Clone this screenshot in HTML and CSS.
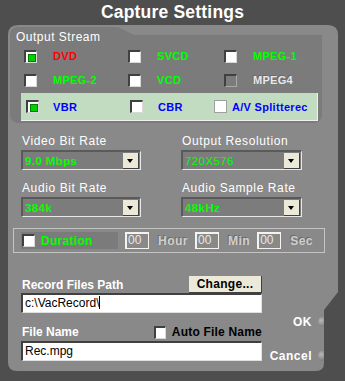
FILE: index.html
```html
<!DOCTYPE html>
<html lang="en">
<head>
    <meta charset="UTF-8">
    <title>Capture Settings</title>
    <link rel="stylesheet" href="styles.css">
</head>
<body>
    <h1 class="title">Capture Settings</h1>
    <div class="panel">
        <div class="stream-group">
            <div class="group-label">Output Stream</div>
            <div class="check-grid">
                <div class="opt"><span class="box checked"></span><span class="red">DVD</span></div>
                <div class="opt"><span class="box"></span><span class="green">SVCD</span></div>
                <div class="opt"><span class="box"></span><span class="green">MPEG-1</span></div>
                <div class="opt"><span class="box"></span><span class="green">MPEG-2</span></div>
                <div class="opt"><span class="box"></span><span class="green">VCD</span></div>
                <div class="opt"><span class="box disabled"></span><span class="muted">MPEG4</span></div>
            </div>
            <div class="rate-band">
                <div class="opt opt-vbr"><span class="box checked"></span><span class="blue">VBR</span></div>
                <div class="opt opt-cbr"><span class="box"></span><span class="blue">CBR</span></div>
                <div class="opt opt-av"><span class="box flat"></span><span class="blue">A/V Splitterec</span></div>
            </div>
        </div>

        <div class="select-grid">
            <div class="field">
                <label>Video Bit Rate</label>
                <div class="select"><span class="bold">9.0 Mbps</span><span class="drop"></span></div>
            </div>
            <div class="field">
                <label>Output Resolution</label>
                <div class="select"><span>720X576</span><span class="drop"></span></div>
            </div>
            <div class="field">
                <label>Audio Bit Rate</label>
                <div class="select"><span class="bold">384k</span><span class="drop"></span></div>
            </div>
            <div class="field">
                <label>Audio Sample Rate</label>
                <div class="select"><span class="bold">48kHz</span><span class="drop"></span></div>
            </div>
        </div>

        <div class="duration">
            <div class="dur-check"><span class="box"></span><span class="green">Duration</span></div>
            <span class="num">00</span><span class="unit">Hour</span>
            <span class="num">00</span><span class="unit">Min</span>
            <span class="num">00</span><span class="unit">Sec</span>
        </div>

        <div class="files">
            <div class="files-left">
                <div class="row-head">
                    <span class="head">Record Files Path</span>
                    <button class="change-btn">Change...</button>
                </div>
                <div class="text-input">c:\VacRecord\<span class="caret"></span></div>
                <div class="row-head row-name">
                    <span class="head">File Name</span>
                    <span class="auto"><span class="box"></span>Auto File Name</span>
                </div>
                <div class="text-input">Rec.mpg</div>
            </div>
            <div class="actions">
                <div class="action action-ok">OK<span class="knob"></span></div>
                <div class="action">Cancel<span class="knob"></span></div>
            </div>
        </div>
    </div>
</body>
</html>
```

FILE: styles.css
```css
* {
    box-sizing: border-box;
    margin: 0;
    padding: 0;
}

body {
    width: 345px;
    height: 381px;
    overflow: hidden;
    background-color: #4e4e4e;
    font-family: "Liberation Sans", Arial, sans-serif;
    font-size: 12px;
    color: #fff;
}

.title {
    height: 25px;
    line-height: 25px;
    text-align: center;
    font-size: 17.5px;
    font-weight: bold;
    letter-spacing: 0.2px;
    color: #fff;
}

.panel {
    position: relative;
    margin-left: 8px;
    width: 330px;
    height: 346px;
    padding-top: 2px;
    background-color: #898989;
    clip-path: path("M10,0 H320 Q330,0 330,10 V267 L316,285 V338 Q316,346 308,346 H9 Q0,346 0,337 V10 Q0,0 10,0 Z");
}

/* output stream group */
.stream-group {
    position: relative;
    margin-left: 2px;
    width: 312px;
    height: 96px;
    background-color: #7b7b7b;
    border-radius: 8px;
}

.stream-group::after {
    content: "";
    position: absolute;
    top: 0;
    left: 108px;
    right: 0;
    height: 8px;
    background-color: #898989;
    clip-path: polygon(0 0, 100% 0, 100% 100%, 16px 100%);
}

.group-label {
    padding: 3px 0 0 6px;
    height: 17px;
    line-height: 14px;
    letter-spacing: 0.5px;
}

.check-grid {
    display: grid;
    grid-template-columns: 104px 96px 100px;
    grid-auto-rows: 24px;
    padding-left: 14px;
}

.opt {
    display: flex;
    align-items: center;
    font-size: 11px;
    font-weight: bold;
    letter-spacing: 0.3px;
}

.opt .box {
    margin-right: 16px;
}

.box {
    display: inline-block;
    position: relative;
    width: 13px;
    height: 13px;
    background-color: #fff;
    border-top: 2px solid #404040;
    border-left: 2px solid #404040;
    border-right: 1px solid #d8d8d8;
    border-bottom: 1px solid #d8d8d8;
    flex: none;
}

.box.checked::after {
    content: "";
    position: absolute;
    left: 2px;
    top: 2px;
    width: 6px;
    height: 6px;
    background-color: #00d000;
    border: 1px solid #008000;
}

.box.disabled {
    background-color: #7b7b7b;
    border-right-color: #a8a8a8;
    border-bottom-color: #a8a8a8;
}

.box.flat {
    border: 1px solid #a0a0a0;
    background-color: #fff;
}

.red { color: #ff0000; }
.green { color: #00ff00; }
.blue { color: #0000ff; }

.muted {
    color: #e8e8e8;
    text-shadow: -1px -1px 0 #6a6a6a;
}

.rate-band {
    display: flex;
    align-items: center;
    margin: 1px 0 0 11px;
    width: 297px;
    height: 28px;
    background-color: #c2dcc2;
    border-right: 1px solid #f0f0f0;
    border-bottom: 1px solid #f0f0f0;
    padding-left: 5px;
}

.opt-vbr { width: 104px; }
.opt-vbr .box { margin-right: 14px; }
.opt-cbr { width: 84px; }
.opt-cbr .box { margin-right: 15px; }
.opt-av .box { margin-right: 5px; }

/* selects */
.select-grid {
    display: grid;
    grid-template-columns: 120px 121px;
    column-gap: 40px;
    row-gap: 11px;
    margin: 11px 0 0 13px;
}

.field label {
    display: block;
    height: 16px;
    line-height: 14px;
    letter-spacing: 0.6px;
    padding-left: 1px;
}

.select {
    display: flex;
    align-items: center;
    justify-content: space-between;
    height: 20px;
    background-color: #7c7c7c;
    border-top: 2px solid #5a5a5a;
    border-left: 2px solid #5a5a5a;
    border-right: 1px solid #e8e8e8;
    border-bottom: 1px solid #e8e8e8;
    color: #00ff00;
    font-size: 11.5px;
    padding-left: 2px;
    letter-spacing: 0.4px;
}

.select .bold {
    font-weight: bold;
}

.drop {
    position: relative;
    width: 16px;
    height: 16px;
    margin-right: 1px;
    background-color: #ece9d8;
    border-right: 1px solid #404040;
    border-bottom: 1px solid #404040;
}

.drop::after {
    content: "";
    position: absolute;
    left: 4px;
    top: 6px;
    border-left: 3.5px solid transparent;
    border-right: 3.5px solid transparent;
    border-top: 4px solid #000;
}

/* duration */
.duration {
    display: flex;
    align-items: center;
    margin: 11px 0 0 5px;
    width: 312px;
    height: 25px;
    border: 1px solid #c4c4c4;
    padding-left: 7px;
}

.dur-check {
    display: flex;
    align-items: center;
    width: 97px;
    height: 17px;
    background-color: #7b7b7b;
    font-weight: bold;
    font-size: 12px;
    letter-spacing: 0.3px;
}

.dur-check .box {
    margin: 0 6px 0 1px;
}

.num {
    width: 24px;
    height: 17px;
    margin-left: 7px;
    border: 1px solid #f4f4ec;
    border-top-width: 2px;
    border-left-width: 2px;
    color: #e8e8e8;
    font-size: 12px;
    line-height: 13px;
    padding-left: 1px;
}

.unit {
    color: #cfcfcf;
    text-shadow: -1px -1px 0 #6a6a6a;
    letter-spacing: 0.5px;
    font-weight: bold;
    margin-left: 9px;
}

/* files */
.files {
    display: flex;
    margin: 22px 0 0 13px;
}

.files-left {
    width: 241px;
}

.row-head {
    display: flex;
    align-items: center;
    justify-content: space-between;
    height: 18px;
}

.head {
    font-weight: bold;
    padding-left: 1px;
    padding-top: 2px;
}

.change-btn {
    width: 73px;
    height: 17px;
    background-color: #ece9d8;
    border: none;
    border-right: 1px solid #404040;
    border-bottom: 1px solid #404040;
    font-family: "Liberation Sans", Arial, sans-serif;
    font-size: 12px;
    font-weight: bold;
    color: #000;
    letter-spacing: 0.3px;
}

.text-input {
    height: 20px;
    background-color: #fff;
    border-top: 2px solid #404040;
    border-left: 2px solid #404040;
    border-right: 1px solid #e0e0e0;
    border-bottom: 1px solid #e0e0e0;
    color: #000;
    font-size: 12px;
    line-height: 16px;
    padding-left: 2px;
}

.caret {
    display: inline-block;
    width: 1px;
    height: 13px;
    background-color: #000;
    vertical-align: -2px;
}

.row-name {
    height: 28px;
    align-items: flex-end;
    padding-bottom: 2px;
}

.auto {
    display: flex;
    align-items: center;
    font-weight: bold;
    color: #000;
    letter-spacing: 0.2px;
}

.auto .box {
    margin-right: 6px;
    width: 12px;
    height: 13px;
}

.actions {
    display: flex;
    flex-direction: column;
    align-items: flex-end;
    width: 64px;
    padding-top: 40px;
}

.action {
    display: flex;
    align-items: center;
    height: 14px;
    font-weight: bold;
    letter-spacing: 0.5px;
}

.action-ok {
    margin-bottom: 20px;
}

.knob {
    width: 8px;
    height: 10px;
    margin-left: 6px;
    border-radius: 50%;
    background: radial-gradient(circle at 40% 35%, #b8b8b8, #6c6c6c);
}
```
